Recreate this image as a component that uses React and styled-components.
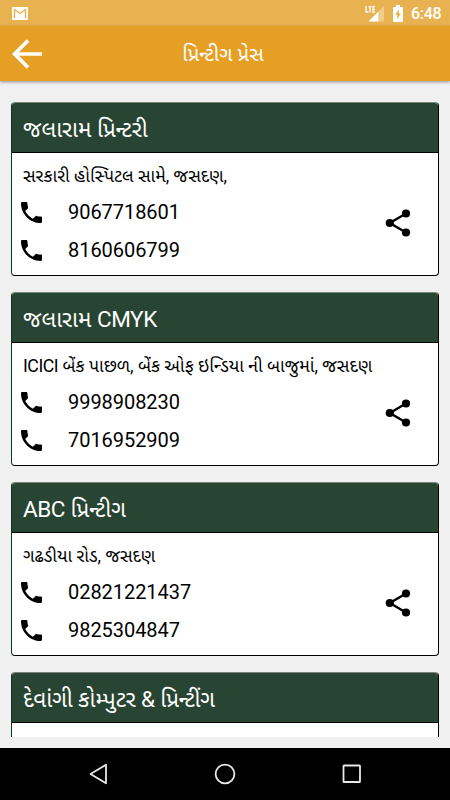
import React from "react";
import styled, { createGlobalStyle } from "styled-components";

const Global = createGlobalStyle`
  * { box-sizing: border-box; }
  body {
    margin: 0;
    background: #f0f0f0;
    font-family: Roboto, "Noto Sans Gujarati", "Noto Sans", sans-serif;
  }
`;

const Screen = styled.div`
  width: 450px;
  height: 800px;
  display: flex;
  flex-direction: column;
  overflow: hidden;
  background: #f0f0f0;
`;

const StatusBar = styled.div`
  flex: none;
  height: 26px;
  padding: 0 9px 0 12px;
  display: flex;
  align-items: center;
  justify-content: space-between;
  background: #e9b250;
  color: #fff;
  svg { display: block; }
`;

const StatusIcons = styled.div`
  display: flex;
  align-items: center;
  gap: 8px;
`;

const Clock = styled.span`
  width: 30px;
  padding-top: 2px;
  font-size: 16px;
  letter-spacing: -0.3px;
  font-weight: 500;
  line-height: 24px;
  white-space: nowrap;
`;

const AppBar = styled.header`
  flex: none;
  height: 55px;
  padding: 0 12px;
  display: grid;
  grid-template-columns: 30px 1fr 34px;
  align-items: center;
  background: #e69f25;
  box-shadow: 0 1px 3px rgba(0, 0, 0, 0.4);
  svg { display: block; }
`;

const Title = styled.h1`
  margin: 0;
  text-align: center;
  font-size: 20.4px;
  font-weight: 400;
  line-height: 30px;
  color: #fff;
`;

const List = styled.main`
  flex: none;
  height: 656px;
  padding: 21px 11px 0;
  display: flex;
  flex-direction: column;
  gap: 16px;
  overflow: hidden;
`;

const Card = styled.article`
  flex: none;
  height: 174px;
  border: 1px solid #000;
  border-top-color: #77857c;
  border-left-color: #10351f;
  border-radius: 4px;
  overflow: hidden;
  background: #fff;
`;

const CardHead = styled.h2`
  margin: 0 -1px;
  height: 50px;
  padding: 0 12px;
  border-bottom: 1px solid #000;
  background: #284432;
  color: #fff;
  font-size: 22.5px;
  font-weight: 400;
  line-height: 53px;
  letter-spacing: ${(p) => p.$tracking || "normal"};
  white-space: nowrap;
`;

const CardBody = styled.div`
  height: 122px;
  display: grid;
  grid-template-columns: 1fr 26px;
  grid-template-rows: 30px 1fr;
  padding: 10px 27px 0 9px;
`;

const Address = styled.p`
  grid-column: 1 / -1;
  margin: 0 0 0 2px;
  font-size: 17.7px;
  line-height: 26px;
  white-space: nowrap;
  color: #000;
`;

const Latin = styled.span`
  letter-spacing: -0.45px;
`;

const Phones = styled.div`
  display: flex;
  flex-direction: column;
`;

const Phone = styled.div`
  height: 38px;
  display: flex;
  align-items: center;
  font-size: 20px;
  letter-spacing: -0.05px;
  color: #000;
  svg { display: block; margin-right: 26px; }
`;

const Share = styled.div`
  padding-top: 16px;
  svg { display: block; }
`;

const NavBar = styled.nav`
  flex: none;
  height: 52px;
  margin-top: 11px;
  padding: 0 85px;
  display: flex;
  align-items: center;
  justify-content: space-between;
  background: #000;
  svg { display: block; }
`;

const Mail = () => (
  <svg width="16" height="13" viewBox="0 0 16 13">
    <rect width="16" height="13" rx="1" fill="#fff" />
    <path d="M2.5 11V2.5L8 6.5l5.5-4V11" fill="none" stroke="#e9b250" strokeWidth="1.4" />
  </svg>
);

const Signal = () => (
  <svg width="20" height="17" viewBox="0 0 20 17">
    <path d="M19 1v15.5H3.5z" fill="#f0cc8c" />
    <path d="M13.3 6.7v9.8H3.5z" fill="#fff" />
    <path d="M11 0v8H0V0z" fill="#e9b250" />
    <path d="M1 1v6h2.4M3.5 1.6h3M5 1.6V7.6M10 1.6H8v5.4h2M8 4.3h1.8" fill="none" stroke="#fff" strokeWidth="1.3" />
  </svg>
);

const Battery = () => (
  <svg width="10" height="17" viewBox="0 0 10 17">
    <path d="M3 0h4v2h2q1 0 1 1v13q0 1-1 1H1q-1 0-1-1V3q0-1 1-1h2z" fill="#fff" />
    <path d="M5.8 4.5v4h2L4.2 14.2v-4.4h-2z" fill="#e9b250" />
  </svg>
);

const BackArrow = () => (
  <svg width="30" height="30" viewBox="0 0 30 30">
    <path d="M30 15H3M16 1.5L2.5 15L16 28.5" fill="none" stroke="#fff" strokeWidth="3.7" />
  </svg>
);

const PhoneIcon = () => (
  <svg width="21" height="21" viewBox="3 3 18 18">
    <path d="M6.62 10.79c1.44 2.83 3.76 5.14 6.59 6.59l2.2-2.2c.27-.27.67-.36 1.02-.24 1.12.37 2.33.57 3.57.57.55 0 1 .45 1 1V20c0 .55-.45 1-1 1-9.39 0-17-7.61-17-17 0-.55.45-1 1-1h3.5c.55 0 1 .45 1 1 0 1.25.2 2.45.57 3.57.11.35.03.74-.25 1.02z" />
  </svg>
);

const ShareIcon = () => (
  <svg width="26" height="28" viewBox="0 0 26 28">
    <path d="M21 4.5L4.8 14L21 23.5" fill="none" stroke="#000" strokeWidth="2.4" />
    <circle cx="21" cy="4.5" r="4.1" />
    <circle cx="4.8" cy="14" r="4.1" />
    <circle cx="21" cy="23.5" r="4.1" />
  </svg>
);

const NavIcon = styled.svg.attrs({ width: 26, height: 26, viewBox: "0 0 26 26" })`
  fill: none;
  stroke: #e8e8e8;
  stroke-width: 1.8;
  stroke-linejoin: round;
`;

const shops = [
  {
    id: 1,
    name: "જલારામ પ્રિન્ટરી",
    address: "સરકારી હોસ્પિટલ સામે, જસદણ,",
    phones: ["9067718601", "8160606799"],
  },
  {
    id: 2,
    name: <>જલારામ <Latin>CMYK</Latin></>,
    address: <><Latin>ICICI</Latin> બેંક પાછળ, બેંક ઓફ ઇન્ડિયા ની બાજુમાં, જસદણ</>,
    phones: ["9998908230", "7016952909"],
  },
  {
    id: 3,
    name: <><Latin>ABC</Latin> પ્રિન્ટીગ</>,
    address: "ગઢડીયા રોડ, જસદણ",
    phones: ["02821221437", "9825304847"],
  },
  {
    id: 4,
    name: "દેવાંગી કોમ્પુટર & પ્રિન્ટીંગ",
    tracking: "-0.15px",
    address: "",
    phones: [],
  },
];

export default function App() {
  return (
    <>
      <Global />
      <Screen>
        <StatusBar>
          <Mail />
          <StatusIcons>
            <Signal />
            <Battery />
            <Clock>6:48</Clock>
          </StatusIcons>
        </StatusBar>
        <AppBar>
          <BackArrow />
          <Title>પ્રિન્ટીગ પ્રેસ</Title>
        </AppBar>
        <List>
          {shops.map((s) => (
            <Card key={s.id}>
              <CardHead $tracking={s.tracking}>{s.name}</CardHead>
              <CardBody>
                <Address>{s.address}</Address>
                <Phones>
                  {s.phones.map((p) => (
                    <Phone key={p}>
                      <PhoneIcon />
                      {p}
                    </Phone>
                  ))}
                </Phones>
                <Share>
                  <ShareIcon />
                </Share>
              </CardBody>
            </Card>
          ))}
        </List>
        <NavBar>
          <NavIcon><path d="M5.5 13L21 3.7v18.6z" /></NavIcon>
          <NavIcon><circle cx="13" cy="13" r="9.4" /></NavIcon>
          <NavIcon><rect x="4.5" y="4.5" width="16.5" height="16.5" rx=".6" /></NavIcon>
        </NavBar>
      </Screen>
    </>
  );
}
